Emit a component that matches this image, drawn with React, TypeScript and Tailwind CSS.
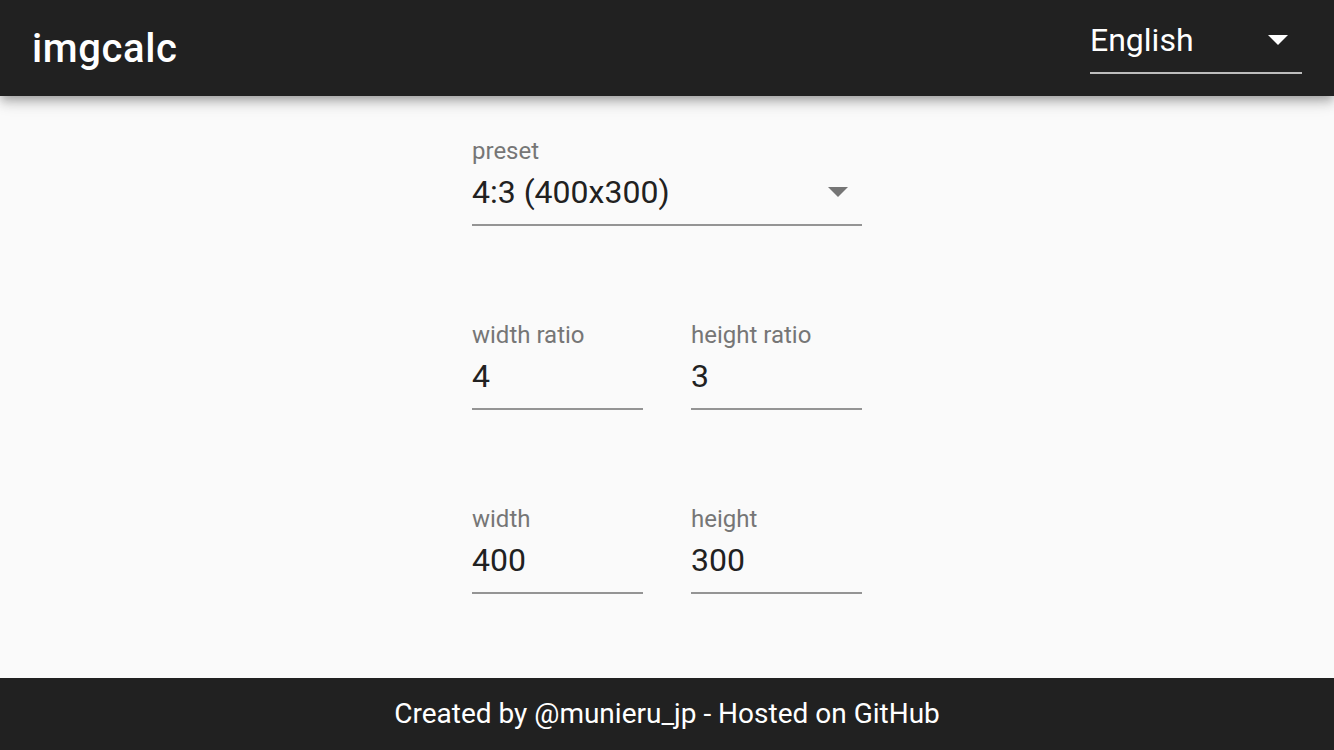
const font = { fontFamily: "Roboto, 'Liberation Sans', sans-serif" };

function Caret({ className }: { className: string }) {
  return (
    <svg viewBox="0 0 20 10" className={className} fill="currentColor">
      <path d="M0 0h20L10 10z" />
    </svg>
  );
}

function Field({ label, value, select, className = "" }: { label: string; value: string; select?: boolean; className?: string }) {
  return (
    <div className={"flex flex-col " + className}>
      <label className="h-6 text-[24px] leading-6 text-[#767676]">{label}</label>
      <div className="mt-[9px] flex items-center justify-between border-b-2 border-[#949494] pb-3">
        <span className="h-10 text-[32px] leading-10 text-[#212121]">{value}</span>
        {select && <Caret className="mr-[14px] h-[10px] w-5 text-[#757575]" />}
      </div>
    </div>
  );
}

export default function App() {
  return (
    <div className="flex h-screen flex-col bg-[#fafafa]" style={font}>
      <header className="relative z-10 flex h-24 shrink-0 items-start justify-between bg-[#212121] px-8 shadow-[0_4px_8px_-2px_rgba(0,0,0,0.2),0_8px_10px_0_rgba(0,0,0,0.14),0_2px_20px_0_rgba(0,0,0,0.12)]">
        <h1 className="mt-[29px] text-[40px] font-medium leading-10 tracking-[0.6px] text-white">imgcalc</h1>
        <div className="mt-5 flex w-[212px] items-center justify-between border-b-2 border-[#bdbdbd] pb-3">
          <span className="h-10 text-[32px] leading-10 text-white">English</span>
          <Caret className="mr-[14px] h-[10px] w-5 text-white" />
        </div>
      </header>

      <main className="flex flex-1 justify-center pt-[43px]">
        <div className="flex w-[390px] flex-col gap-[97px]">
          <Field label="preset" value="4:3 (400x300)" select />
          <div className="flex gap-12">
            <Field className="flex-1" label="width ratio" value="4" />
            <Field className="flex-1" label="height ratio" value="3" />
          </div>
          <div className="flex gap-12">
            <Field className="flex-1" label="width" value="400" />
            <Field className="flex-1" label="height" value="300" />
          </div>
        </div>
      </main>

      <footer className="flex h-[72px] shrink-0 items-center justify-center bg-[#212121] text-[28px] text-white">
        <span>
          Created by <a>@munieru_jp</a> - Hosted on <a>GitHub</a>
        </span>
      </footer>
    </div>
  );
}
